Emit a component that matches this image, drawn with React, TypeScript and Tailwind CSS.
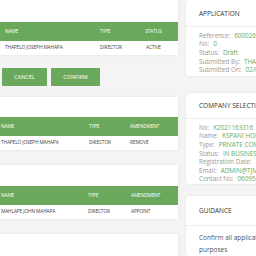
import React from "react";

type Row = { name: string; type: string; last: string };

function PeopleTable({
  head,
  row,
  cols,
  pad,
  center,
}: {
  head: string;
  row: Row;
  cols: string;
  pad: string;
  center?: boolean;
}) {
  return (
    <div className="text-[4.8px] uppercase tracking-tight">
      <div className={`grid h-[19px] items-center bg-[#6aa95b] text-white ${cols} ${pad}`}>
        <span>Name</span>
        <span>Type</span>
        <span className={center ? "text-center" : ""}>{head}</span>
      </div>
      <div className={`grid h-[14px] items-center text-[#444] ${cols} ${pad}`}>
        <span>{row.name}</span>
        <span>{row.type}</span>
        <span className={center ? "text-center" : ""}>{row.last}</span>
      </div>
    </div>
  );
}

function InfoCard({
  title,
  rows,
  className,
}: {
  title: string;
  rows: [string, string][];
  className: string;
}) {
  return (
    <div className={`rounded-sm bg-white shadow-[0_0_3px_rgba(0,0,0,0.08)] ${className}`}>
      <div className="border-b border-[#eeeeee] px-[13px] pb-[7px] text-[6.5px] font-medium uppercase text-[#333]">
        {title}
      </div>
      <div className="flex flex-col gap-[2px] px-[13px] pt-[6px] text-[6.3px] leading-[6.6px]">
        {rows.map(([k, v]) => (
          <div key={k} className="flex gap-[4px] whitespace-nowrap">
            <span className="text-[#999]">{k}</span>
            <span className="text-[#6aa95b]">{v}</span>
          </div>
        ))}
      </div>
    </div>
  );
}

export default function App() {
  return (
    <div
      className="flex h-[256px] w-[256px] gap-[8px] overflow-hidden bg-[#f4f4f4]"
      style={{ fontFamily: '"Open Sans", "Liberation Sans", sans-serif' }}
    >
      <div className="flex w-[178px] shrink-0 flex-col">
        <div className="h-[55px] bg-white pt-[22px] shadow-[0_0_3px_rgba(0,0,0,0.08)]">
          <PeopleTable
            head="Status"
            row={{ name: "Thapelo Joseph Mahapa", type: "Director", last: "Active" }}
            cols="grid-cols-[95px_37px_1fr]"
            pad="pl-[5px] pr-[8px]"
            center
          />
        </div>
        <div className="mt-[13px] flex gap-[4px] pl-[2px]">
          <button className="h-[18px] w-[45px] rounded-[1px] bg-[#6aa95b] text-[5.5px] uppercase text-white">
            Cancel
          </button>
          <button className="h-[18px] w-[49px] rounded-[1px] bg-[#6aa95b] text-[5.5px] uppercase text-white">
            Confirm
          </button>
        </div>
        <div className="mt-[11px] h-[55px] bg-white pt-[20px] shadow-[0_0_3px_rgba(0,0,0,0.08)]">
          <PeopleTable
            head="Amendment"
            row={{ name: "Thapelo Joseph Mahapa", type: "Director", last: "Remove" }}
            cols="grid-cols-[88px_41px_1fr]"
            pad="pl-[1px]"
          />
        </div>
        <div className="mt-[15px] h-[58px] bg-white pt-[21px] shadow-[0_0_3px_rgba(0,0,0,0.08)]">
          <PeopleTable
            head="Amendment"
            row={{ name: "Mahlape John Mahapa", type: "Director", last: "Appoint" }}
            cols="grid-cols-[87px_43px_1fr]"
            pad="pl-[1px]"
          />
        </div>
        <div className="mt-[15px] h-[40px] bg-white shadow-[0_0_3px_rgba(0,0,0,0.08)]" />
      </div>
      <div className="flex w-[180px] shrink-0 flex-col">
        <InfoCard
          title="Application"
          className="h-[80px] pt-[9px]"
          rows={[
            ["Reference:", "6000261579"],
            ["No:", "0"],
            ["Status:", "Draft"],
            ["Submitted By:", "THAPELO JOSEPH"],
            ["Submitted On:", "02/03/2022"],
          ]}
        />
        <InfoCard
          title="Company Selection"
          className="mt-[17px] h-[96px] pt-[8px]"
          rows={[
            ["No:", "K2021163316"],
            ["Name:", "KSPANI HOLDINGS"],
            ["Type:", "PRIVATE COMPANY"],
            ["Status:", "IN BUSINESS"],
            ["Registration Date:", "30/09/2021"],
            ["Email:", "ADMIN@TJMAHAPA.CO.ZA"],
            ["Contact No:", "0609500000"],
          ]}
        />
        <div className="mt-[12px] flex-1 rounded-sm bg-white pt-[10px] shadow-[0_0_3px_rgba(0,0,0,0.08)]">
          <div className="border-b border-[#eeeeee] px-[13px] pb-[9px] text-[6.5px] font-medium uppercase text-[#333]">
            Guidance
          </div>
          <div className="px-[13px] pt-[6px] text-[6.5px] leading-[12px] text-[#555]">
            Confirm all application details for amendment purposes
          </div>
        </div>
      </div>
    </div>
  );
}
